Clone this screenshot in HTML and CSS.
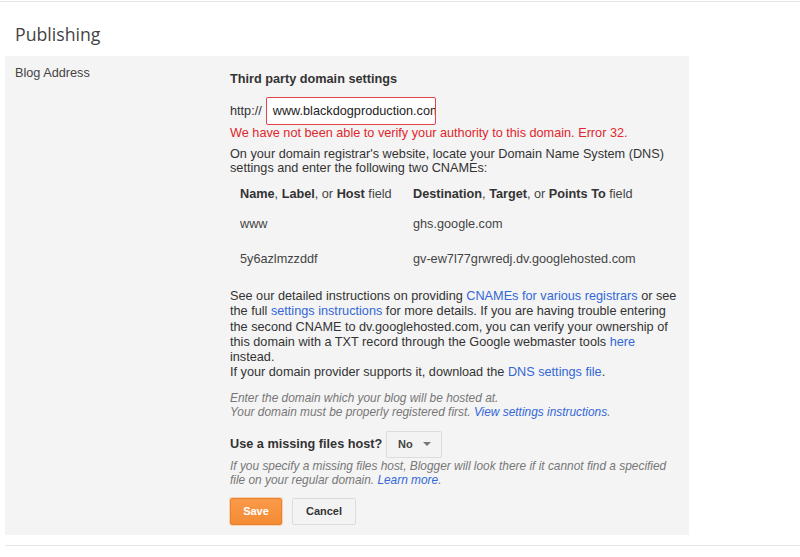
FILE: index.html
```html
<!DOCTYPE html>
<html>
<head>
<meta charset="utf-8">
<link rel="stylesheet" href="styles.css">
</head>
<body>
<div class="topline"></div>
<h1 class="title">Publishing</h1>
<div class="panel">
  <div class="label">Blog Address</div>
  <div class="content">
    <div class="heading">Third party domain settings</div>
    <div class="addr">
      <span class="proto">http://</span>
      <div class="input"><span>www.blackdogproduction.com</span></div>
    </div>
    <div class="error">We have not been able to verify your authority to this domain. Error 32.</div>
    <p class="para">On your domain registrar's website, locate your Domain Name System (DNS) settings and enter the following two CNAMEs:</p>
    <div class="cname">
      <div class="th"><b>Name</b>, <b>Label</b>, or <b>Host</b> field</div>
      <div class="th"><b>Destination</b>, <b>Target</b>, or <b>Points To</b> field</div>
      <div class="td r1">www</div>
      <div class="td r1">ghs.google.com</div>
      <div class="td r2">5y6azlmzzddf</div>
      <div class="td r2">gv-ew7l77grwredj.dv.googlehosted.com</div>
    </div>
    <p class="para2">See our detailed instructions on providing <a class="lnk">CNAMEs for various registrars</a> or see the full <a class="lnk">settings instructions</a> for more details. If you are having trouble entering the second CNAME to dv.googlehosted.com, you can verify your ownership of this domain with a TXT record through the Google webmaster tools <a class="lnk">here</a> instead.<br>If your domain provider supports it, download the <a class="lnk">DNS settings file</a>.</p>
    <p class="hint">Enter the domain which your blog will be hosted at.<br>Your domain must be properly registered first. <a class="lnk">View settings instructions</a>.</p>
    <div class="missing">
      <span class="mlabel">Use a missing files host?</span>
      <div class="select"><span>No</span><span class="caret"></span></div>
    </div>
    <p class="hint2">If you specify a missing files host, Blogger will look there if it cannot find a specified file on your regular domain. <a class="lnk">Learn more</a>.</p>
    <div class="buttons">
      <button class="btn save">Save</button>
      <button class="btn cancel">Cancel</button>
    </div>
  </div>
</div>
<div class="bottomline"></div>
</body>
</html>
```

FILE: styles.css
```css
html, body {
  margin: 0;
  padding: 0;
  background: #fff;
  width: 800px;
  height: 557px;
  overflow: hidden;
  font-family: "Liberation Sans", Arial, sans-serif;
  font-size: 12.7px;
  color: #333;
}
.topline {
  height: 1px;
  margin-top: 1px;
  background: #e5e5e5;
}
.title {
  margin: 0;
  padding: 20px 0 0 15px;
  height: 34px;
  font-family: "Open Sans", sans-serif;
  font-weight: 400;
  font-size: 17.7px;
  line-height: 24px;
  color: #444;
}
.panel {
  margin-left: 5px;
  width: 677px;
  padding: 9px 7px 10px 0;
  background: #f4f4f4;
  display: flex;
}
.label {
  width: 215px;
  padding-left: 10px;
  line-height: 16px;
  color: #444;
}
.content {
  width: 452px;
  padding-top: 6px;
  line-height: 15px;
}
.heading {
  font-weight: bold;
  line-height: 16px;
  color: #333;
}
.addr {
  display: flex;
  align-items: center;
  gap: 4px;
  margin-top: 10px;
}
.proto { color: #333; }
.input {
  width: 156px;
  height: 26px;
  border: 1px solid #e0434b;
  border-radius: 2px;
  background: #fff;
  padding: 0 6px;
  box-sizing: content-box;
  display: flex;
  align-items: center;
  overflow: hidden;
  white-space: nowrap;
}
.input span { color: #222; }
.error {
  margin-top: 0;
  color: #e0262c;
  line-height: 16px;
}
.para {
  margin: 6px 0 0;
  line-height: 14px;
}
.cname {
  display: grid;
  grid-template-columns: 173px auto;
  padding-left: 10px;
  margin-top: 7px;
}
.th {
  height: 24px;
  line-height: 24px;
  color: #444;
}
.th b { color: #333; }
.td {
  color: #444;
}
.td.r1 { height: 30px; line-height: 30px; margin-top: 3px; }
.td.r2 { height: 33px; line-height: 40px; }
.para2 {
  margin: 17px 0 0;
  line-height: 15.3px;
  color: #333;
}
.lnk {
  color: #3367d6;
  text-decoration: none;
}
.hint {
  margin: 10px 0 0;
  font-size: 11.9px;
  line-height: 14px;
  font-style: italic;
  color: #777;
}
.missing {
  display: flex;
  align-items: center;
  gap: 4px;
  margin-top: 12px;
}
.mlabel {
  font-weight: bold;
  font-size: 12.7px;
  color: #333;
}
.select {
  width: 54px;
  height: 25px;
  border: 1px solid #dcdcdc;
  border-radius: 2px;
  background: #f3f3f3;
  display: flex;
  align-items: center;
  justify-content: center;
  gap: 10px;
  font-size: 11px;
  font-weight: bold;
  color: #444;
  box-sizing: content-box;
}
.caret {
  width: 0;
  height: 0;
  border-left: 4px solid transparent;
  border-right: 4px solid transparent;
  border-top: 4px solid #777;
}
.hint2 {
  margin: 1px 0 0;
  font-size: 11.9px;
  line-height: 14px;
  font-style: italic;
  color: #777;
}
.buttons {
  display: flex;
  gap: 10px;
  margin-top: 11px;
}
.btn {
  height: 27px;
  padding: 0;
  font-family: "Liberation Sans", Arial, sans-serif;
  font-size: 11px;
  font-weight: bold;
  border-radius: 2px;
  cursor: pointer;
}
.save {
  width: 52px;
  background: linear-gradient(#fa9a4a, #f48b34);
  border: 1px solid #e58030;
  color: #fff;
  box-shadow: 0 0 0 1px #fbd3b0;
}
.cancel {
  width: 64px;
  background: #f3f3f3;
  border: 1px solid #dcdcdc;
  color: #333;
}
.bottomline {
  height: 1px;
  margin: 10px 0 0 5px;
  background: #e8e8e8;
}
```
